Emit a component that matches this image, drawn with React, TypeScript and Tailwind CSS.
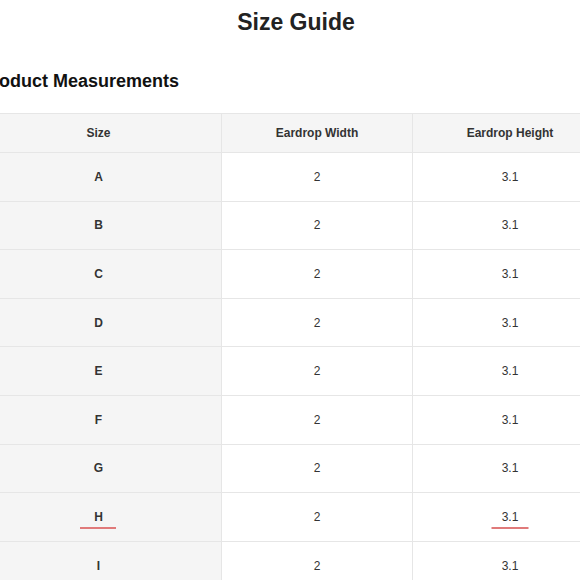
const rows = ["A", "B", "C", "D", "E", "F", "G", "H", "I"]

export default function App() {
  return (
    <div className="min-h-[580px] overflow-hidden bg-white font-['Liberation_Sans',Arial,sans-serif] text-[#222]">
      <div className="ml-[-25px] w-[642px] pt-[8px]">
        <h1 className="text-center text-[23px] font-bold leading-[28px] text-[#222]">Size Guide</h1>
        <h3 className="mt-[33px] ml-[5px] text-[18px] font-bold leading-[24px] text-[#111]">Product Measurements</h3>
        <div className="mt-[20px] w-[636px] border-t border-l border-[#e6e6e6] text-[12px] text-[#333]">
          <div className="grid grid-cols-[246px_191px_199px] bg-[#f5f5f5] font-bold">
            <div className="flex h-[39px] items-center justify-center border-r border-b border-[#e6e6e6]">Size</div>
            <div className="flex h-[39px] items-center justify-center border-r border-b border-[#e6e6e6]">Eardrop Width</div>
            <div className="flex h-[39px] items-center justify-center border-r border-b border-[#e6e6e6] pr-[4px]">Eardrop Height</div>
          </div>
          {rows.map((r) => {
            const marked = r === "H"
            return (
              <div key={r} className="grid grid-cols-[246px_191px_199px]">
                <div className="flex h-[48.6px] items-center justify-center border-r border-b border-[#e6e6e6] bg-[#f5f5f5] font-bold">
                  <span className="relative">
                    {r}
                    {marked && <span className="absolute left-1/2 top-[19px] h-[2px] w-[36px] -translate-x-1/2 bg-[#e07a7a]" />}
                  </span>
                </div>
                <div className="flex h-[48.6px] items-center justify-center border-r border-b border-[#e6e6e6] bg-white">2</div>
                <div className="flex h-[48.6px] items-center justify-center border-r border-b border-[#e6e6e6] bg-white pr-[4px]">
                  <span className="relative">
                    3.1
                    {marked && <span className="absolute left-1/2 top-[19px] h-[2px] w-[37px] -translate-x-1/2 bg-[#e07a7a]" />}
                  </span>
                </div>
              </div>
            )
          })}
        </div>
      </div>
    </div>
  )
}
